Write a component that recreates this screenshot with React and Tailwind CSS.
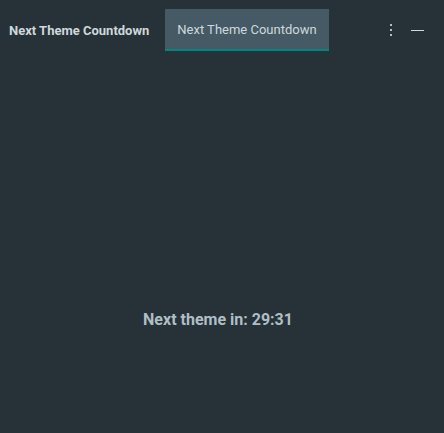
export default function App() {
    return (
        <div className="w-[444px] h-[433px] bg-[#263238] text-[#b0bec5] pt-[9px]" style={{ fontFamily: 'Roboto, "Liberation Sans", sans-serif' }}>
            {/* Header */}
            <div className="flex items-center h-[42px] pl-[9px] pr-[20px]">
                <div className="font-bold text-[13px] text-[#cfd8dc] mr-[16px] pt-[1px]">
                    Next Theme Countdown
                </div>
                <div className="h-[42px] px-[12px] pt-[2px] flex items-center text-[13px] bg-[#455a64] text-[#cfd8dc] border-b-2 border-[#00897b]">
                    Next Theme Countdown
                </div>
                <div className="ml-auto flex items-center gap-[19px]">
                    <div className="flex flex-col gap-[3px] items-center">
                        <span className="w-[2px] h-[2px] bg-[#b0bec5]" />
                        <span className="w-[2px] h-[2px] bg-[#b0bec5]" />
                        <span className="w-[2px] h-[2px] bg-[#b0bec5]" />
                    </div>
                    <span className="w-[13px] h-[1px] bg-[#cfd8dc]" />
                </div>
            </div>

            {/* Body */}
            <div className="pt-[257px] pr-[8px] text-center">
                <span className="font-bold text-base leading-6 text-[#b0bec5]">Next theme in: 29:31</span>
            </div>
        </div>
    );
}
